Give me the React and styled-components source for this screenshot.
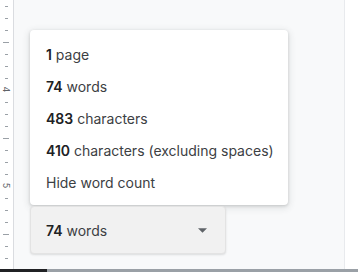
import React from "react";
import styled, { createGlobalStyle } from "styled-components";

const GlobalStyle = createGlobalStyle`
  html, body {
    margin: 0;
    padding: 0;
    background: #f8f9fa;
  }
  body {
    font-family: Inter, Roboto, "Liberation Sans", sans-serif;
  }
`;

const stats = [
  { num: "1", label: "page" },
  { num: "74", label: "words" },
  { num: "483", label: "characters" },
  { num: "410", label: "characters (excluding spaces)" },
];

const ticks = Array.from({ length: 22 }, (_, i) => i);

const App = () => {
  return (
    <>
      <GlobalStyle />
      <Screen>
        <Main>
          <Ruler>
            {ticks.map((i) => {
              const y = 6 + i * 12;
              const mod = i % 8;
              if (mod === 7) return null;
              return <Tick key={i} style={{ top: y }} $long={mod === 3} />;
            })}
            <RulerNum style={{ top: 85 }}>4</RulerNum>
            <RulerNum style={{ top: 181 }}>5</RulerNum>
          </Ruler>
          <Canvas>
            <Menu>
              {stats.map((s) => (
                <Item key={s.num + s.label}>
                  <span>
                    <b>{s.num}</b> {s.label}
                  </span>
                </Item>
              ))}
              <Item>
                <span>Hide word count</span>
              </Item>
            </Menu>
            <Counter>
              <span>
                <b>74</b> words
              </span>
              <Caret viewBox="0 0 10 5">
                <path d="M0 0 L10 0 L5 5 Z" />
              </Caret>
            </Counter>
          </Canvas>
          <Side />
        </Main>
        <BottomBar>
          <Thumb />
        </BottomBar>
      </Screen>
    </>
  );
};

export default App;

const Screen = styled.div`
  width: 358px;
  height: 272px;
  display: flex;
  flex-direction: column;
  overflow: hidden;
`;

const Main = styled.div`
  flex: 1;
  display: flex;
  min-height: 0;
`;

const Ruler = styled.div`
  position: relative;
  width: 13px;
  background: #fff;
  border-right: 1px solid #dadce0;
  flex-shrink: 0;
`;

const Tick = styled.div`
  position: absolute;
  left: ${(p) => (p.$long ? "3px" : "5px")};
  width: ${(p) => (p.$long ? "6px" : "3px")};
  height: 1px;
  background: #9aa0a6;
`;

const RulerNum = styled.div`
  position: absolute;
  left: 2px;
  width: 9px;
  font-size: 9px;
  line-height: 9px;
  color: #5f6368;
  text-align: center;
  transform: rotate(90deg);
`;

const Canvas = styled.div`
  flex: 1;
  background: #f8f9fa;
  padding: 30px 0 0 16px;
  display: flex;
  flex-direction: column;
  align-items: flex-start;
`;

const Menu = styled.div`
  width: 258px;
  background: #fff;
  border-radius: 4px;
  padding: 8px 0 7px;
  box-shadow: 0 1px 3px rgba(60, 64, 67, 0.2), 0 2px 6px 2px rgba(60, 64, 67, 0.1);
`;

const Item = styled.div`
  height: 32px;
  display: flex;
  align-items: center;
  padding-left: 16px;
  font-size: 14px;
  color: #3c4043;
  b {
    font-weight: 600;
    color: #202124;
  }
`;

const Counter = styled.div`
  margin-top: 1px;
  width: 196px;
  height: 48px;
  box-sizing: border-box;
  background: #f1f1f1;
  border: 1px solid #e3e3e3;
  border-radius: 4px;
  box-shadow: 0 1px 2px rgba(60, 64, 67, 0.15);
  display: flex;
  align-items: center;
  justify-content: space-between;
  padding: 0 18px 0 15px;
  font-size: 14px;
  color: #3c4043;
  b {
    font-weight: 600;
    color: #202124;
  }
`;

const Caret = styled.svg`
  width: 9px;
  height: 5px;
  fill: #5f6368;
`;

const Side = styled.div`
  width: 13px;
  background: #fff;
  border-left: 1px solid #e8eaed;
  flex-shrink: 0;
`;

const BottomBar = styled.div`
  height: 3px;
  background: #9aa0a6;
  display: flex;
`;

const Thumb = styled.div`
  width: 47px;
  background: #202124;
`;
